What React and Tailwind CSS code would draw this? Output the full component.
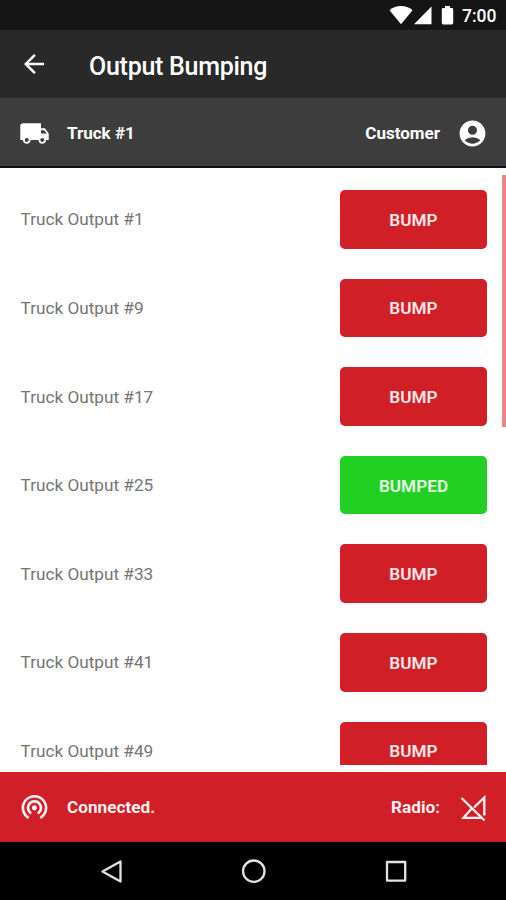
import React from "react";
import { MdArrowBack, MdLocalShipping, MdAccountCircle, MdWifiTethering } from "react-icons/md";

const outputs = [
  { id: 1 },
  { id: 9 },
  { id: 17 },
  { id: 25, bumped: true },
  { id: 33 },
  { id: 41 },
  { id: 49 },
];

function StatusBar() {
  return (
    <div className="flex h-[30px] shrink-0 items-center justify-end bg-[#141414] pr-[9px] text-white">
      <svg className="h-[30px] w-[68px]" viewBox="0 0 68 30" fill="currentColor">
        <path d="M2.5 10.2C9 4.700 19 4.700 25.500 10.200L14 24.200Z" />
        <path d="M44.500 6.500V24.200H27Z" />
        <path d="M58 6h5v2h2q1.200 0 1.200 1.200V23q0 1.400-1.400 1.400H56.200q-1.400 0-1.400-1.400V9.200Q54.800 8 56 8h2Z" />
      </svg>
      <span className="ml-[7px] w-[35px] pt-[4px] text-[17.500px] leading-none font-medium whitespace-nowrap">7:00</span>
    </div>
  );
}

function Row({ id, bumped }) {
  return (
    <div className="flex h-[88.600px] shrink-0 items-center justify-between pr-[19px] pl-[20.500px]">
      <span className="pt-[2px] text-[17.200px] text-[#757575]">Truck Output #{id}</span>
      <button
        className={`h-[58.500px] w-[147px] rounded-[5px] pt-[3px] text-[17.200px] font-semibold text-white/90 ${
          bumped ? "bg-[#21d022]" : "bg-[#d01f26]"
        }`}
      >
        {bumped ? "BUMPED" : "BUMP"}
      </button>
    </div>
  );
}

export default function App() {
  return (
    <div className="flex h-[900px] w-[506px] flex-col overflow-hidden bg-white font-['Roboto',sans-serif]">
      <StatusBar />
      <header className="flex h-[68px] shrink-0 items-center bg-[#292929] pl-[19px] text-white">
        <MdArrowBack size={30} />
        <h1 className="ml-[40px] pt-[4px] text-[25px] leading-none font-medium tracking-[-0.27px]">Output Bumping</h1>
      </header>
      <section className="flex h-[70px] shrink-0 items-center border-b-2 border-[#111] bg-[#3d3d3d] pt-[2px] pr-[18px] pl-[19px] text-[17px] font-bold text-white">
        <MdLocalShipping size={31} />
        <span className="ml-[17px] pt-[2px]">Truck #1</span>
        <span className="ml-auto pt-[2px]">Customer</span>
        <MdAccountCircle size={31} className="ml-[17px]" />
      </section>
      <main className="relative flex h-[597px] shrink-0 flex-col overflow-hidden pt-[7px]">
        {outputs.map((o) => (
          <Row key={o.id} {...o} />
        ))}
        <div className="absolute top-[7px] right-0 h-[252px] w-[4px] bg-[#e8868c]" />
      </main>
      <footer className="mt-[7px] flex h-[70px] shrink-0 items-center bg-[#d01f26] pr-[18px] pl-[19px] text-[17px] font-bold text-white/95">
        <MdWifiTethering size={31} className="mb-[2px]" />
        <span className="ml-[17px] pt-[2px] text-[17.200px]">Connected.</span>
        <span className="ml-auto pt-[2px] text-[17.200px]">Radio:</span>
        <svg className="ml-[17px] h-[31px] w-[31px]" viewBox="0 0 31 31" fill="none" stroke="currentColor" strokeWidth="2.300">
          <path d="M4.500 6L27.500 28.500" />
          <path d="M17 15.500L27.300 5.500V23.500" />
          <path d="M14.500 16.800L6.500 25.800H25" />
        </svg>
      </footer>
      <nav className="flex grow items-center bg-black text-[#e2e2e2]">
        <svg className="h-[58px] w-[506px]" viewBox="0 0 506 58" fill="none" stroke="currentColor" strokeWidth="2.300" strokeLinejoin="round">
          <path d="M120.500 19.500V39.500L102.500 29.500Z" />
          <circle cx="253.800" cy="29.200" r="10.700" />
          <rect x="387" y="20" width="18.200" height="18.600" />
        </svg>
      </nav>
    </div>
  );
}
